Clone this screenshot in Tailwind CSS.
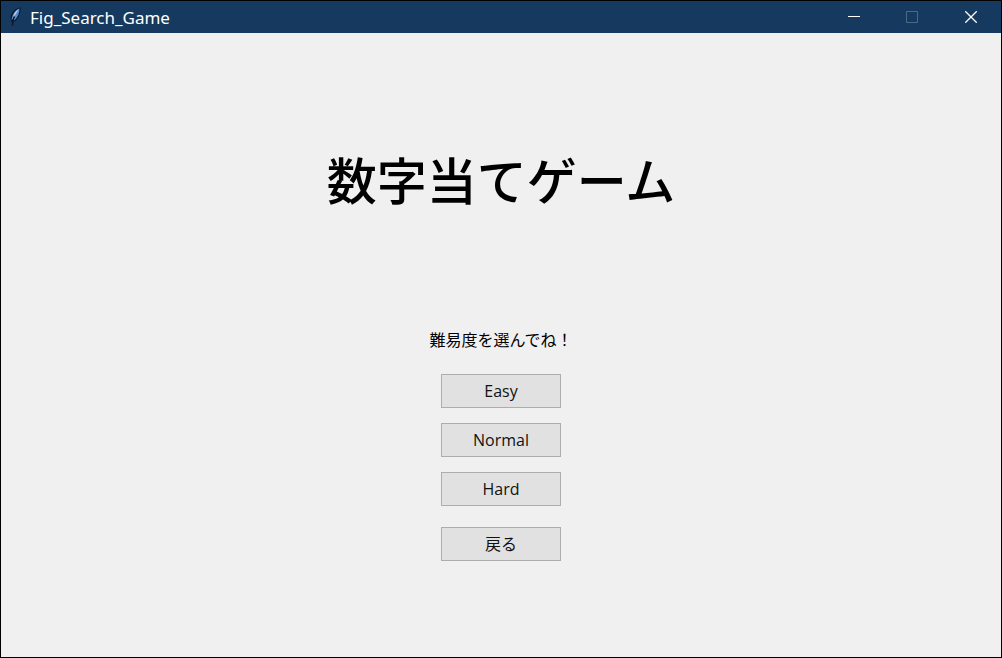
<!DOCTYPE html>
<html lang="ja">
<head>
<meta charset="utf-8">
<meta name="viewport" content="width=device-width, initial-scale=1">
<title>Fig_Search_Game</title>
<script src="https://cdn.jsdelivr.net/npm/@tailwindcss/browser@4"></script>
</head>
<body class="flex min-h-screen flex-col border border-black bg-[#f0f0f0] font-['Open_Sans','Noto_Sans_CJK_JP',sans-serif] text-black">
  <header class="flex h-8 items-center bg-[#163a5f] pl-2 text-white">
    <svg class="h-5 w-3 shrink-0" viewBox="0 0 12 20" aria-hidden="true">
      <path d="M11.500 .5C7 1 2 5 1.500 10.500L2.500 15L5.500 14.500C9.500 12 12 5.500 11.500 .5Z" fill="#0e1a29"/>
      <path d="M10.300 1.500C6.500 3 3 7.500 2.600 12.500L4.800 13.500C8.500 11 10.800 6 10.300 1.500Z" fill="#568ace"/>
      <path d="M9.800 2C7 3.500 5 6.500 4 10L6.500 7.500Z" fill="#b9d4f2"/>
      <path d="M5.500 9.500L3.800 13.500L3.500 18.500" fill="none" stroke="#0b1420" stroke-width="1.400"/>
    </svg>
    <h1 class="ml-[9px] flex-1 pt-px text-[17px] leading-6 font-['Noto_Sans',sans-serif]">Fig_Search_Game</h1>
    <div class="flex h-full">
      <button type="button" aria-label="Minimize" class="flex w-[58px] items-center justify-center">
        <svg class="size-3" viewBox="0 0 12 12" aria-hidden="true"><path d="M0 5.500H12" stroke="#fff"/></svg>
      </button>
      <button type="button" aria-label="Maximize" disabled class="flex w-[58px] items-center justify-center">
        <svg class="size-3" viewBox="0 0 12 12" fill="none" aria-hidden="true"><path d="M.5.5H11.500V11.500H.5Z" stroke="#4c6986"/></svg>
      </button>
      <button type="button" aria-label="Close" class="flex w-[60px] items-center justify-center">
        <svg class="size-3" viewBox="0 0 12 12" aria-hidden="true"><path d="M.3.3L11.700 11.700M11.700.3L.3 11.700" stroke="#fff" stroke-width="1.300"/></svg>
      </button>
    </div>
  </header>
  <main class="flex flex-1 flex-col items-center pt-[113px]">
    <h2 class="text-[50px] leading-[64px] font-medium font-['Noto_Sans_CJK_JP',sans-serif]">数字当てゲーム</h2>
    <p class="mt-[117px] text-base leading-6 font-['Noto_Sans_CJK_JP',sans-serif]">難易度を選んでね！</p>
    <div class="mt-[23px] flex flex-col gap-[15px] text-base text-[#111]">
      <button type="button" class="h-[34px] w-[120px] border border-[#adadad] bg-[#e1e1e1]">Easy</button>
      <button type="button" class="h-[34px] w-[120px] border border-[#adadad] bg-[#e1e1e1]">Normal</button>
      <button type="button" class="h-[34px] w-[120px] border border-[#adadad] bg-[#e1e1e1]">Hard</button>
      <button type="button" class="mt-[6px] h-[34px] w-[120px] border border-[#adadad] bg-[#e1e1e1]">戻る</button>
    </div>
  </main>
</body>
</html>
